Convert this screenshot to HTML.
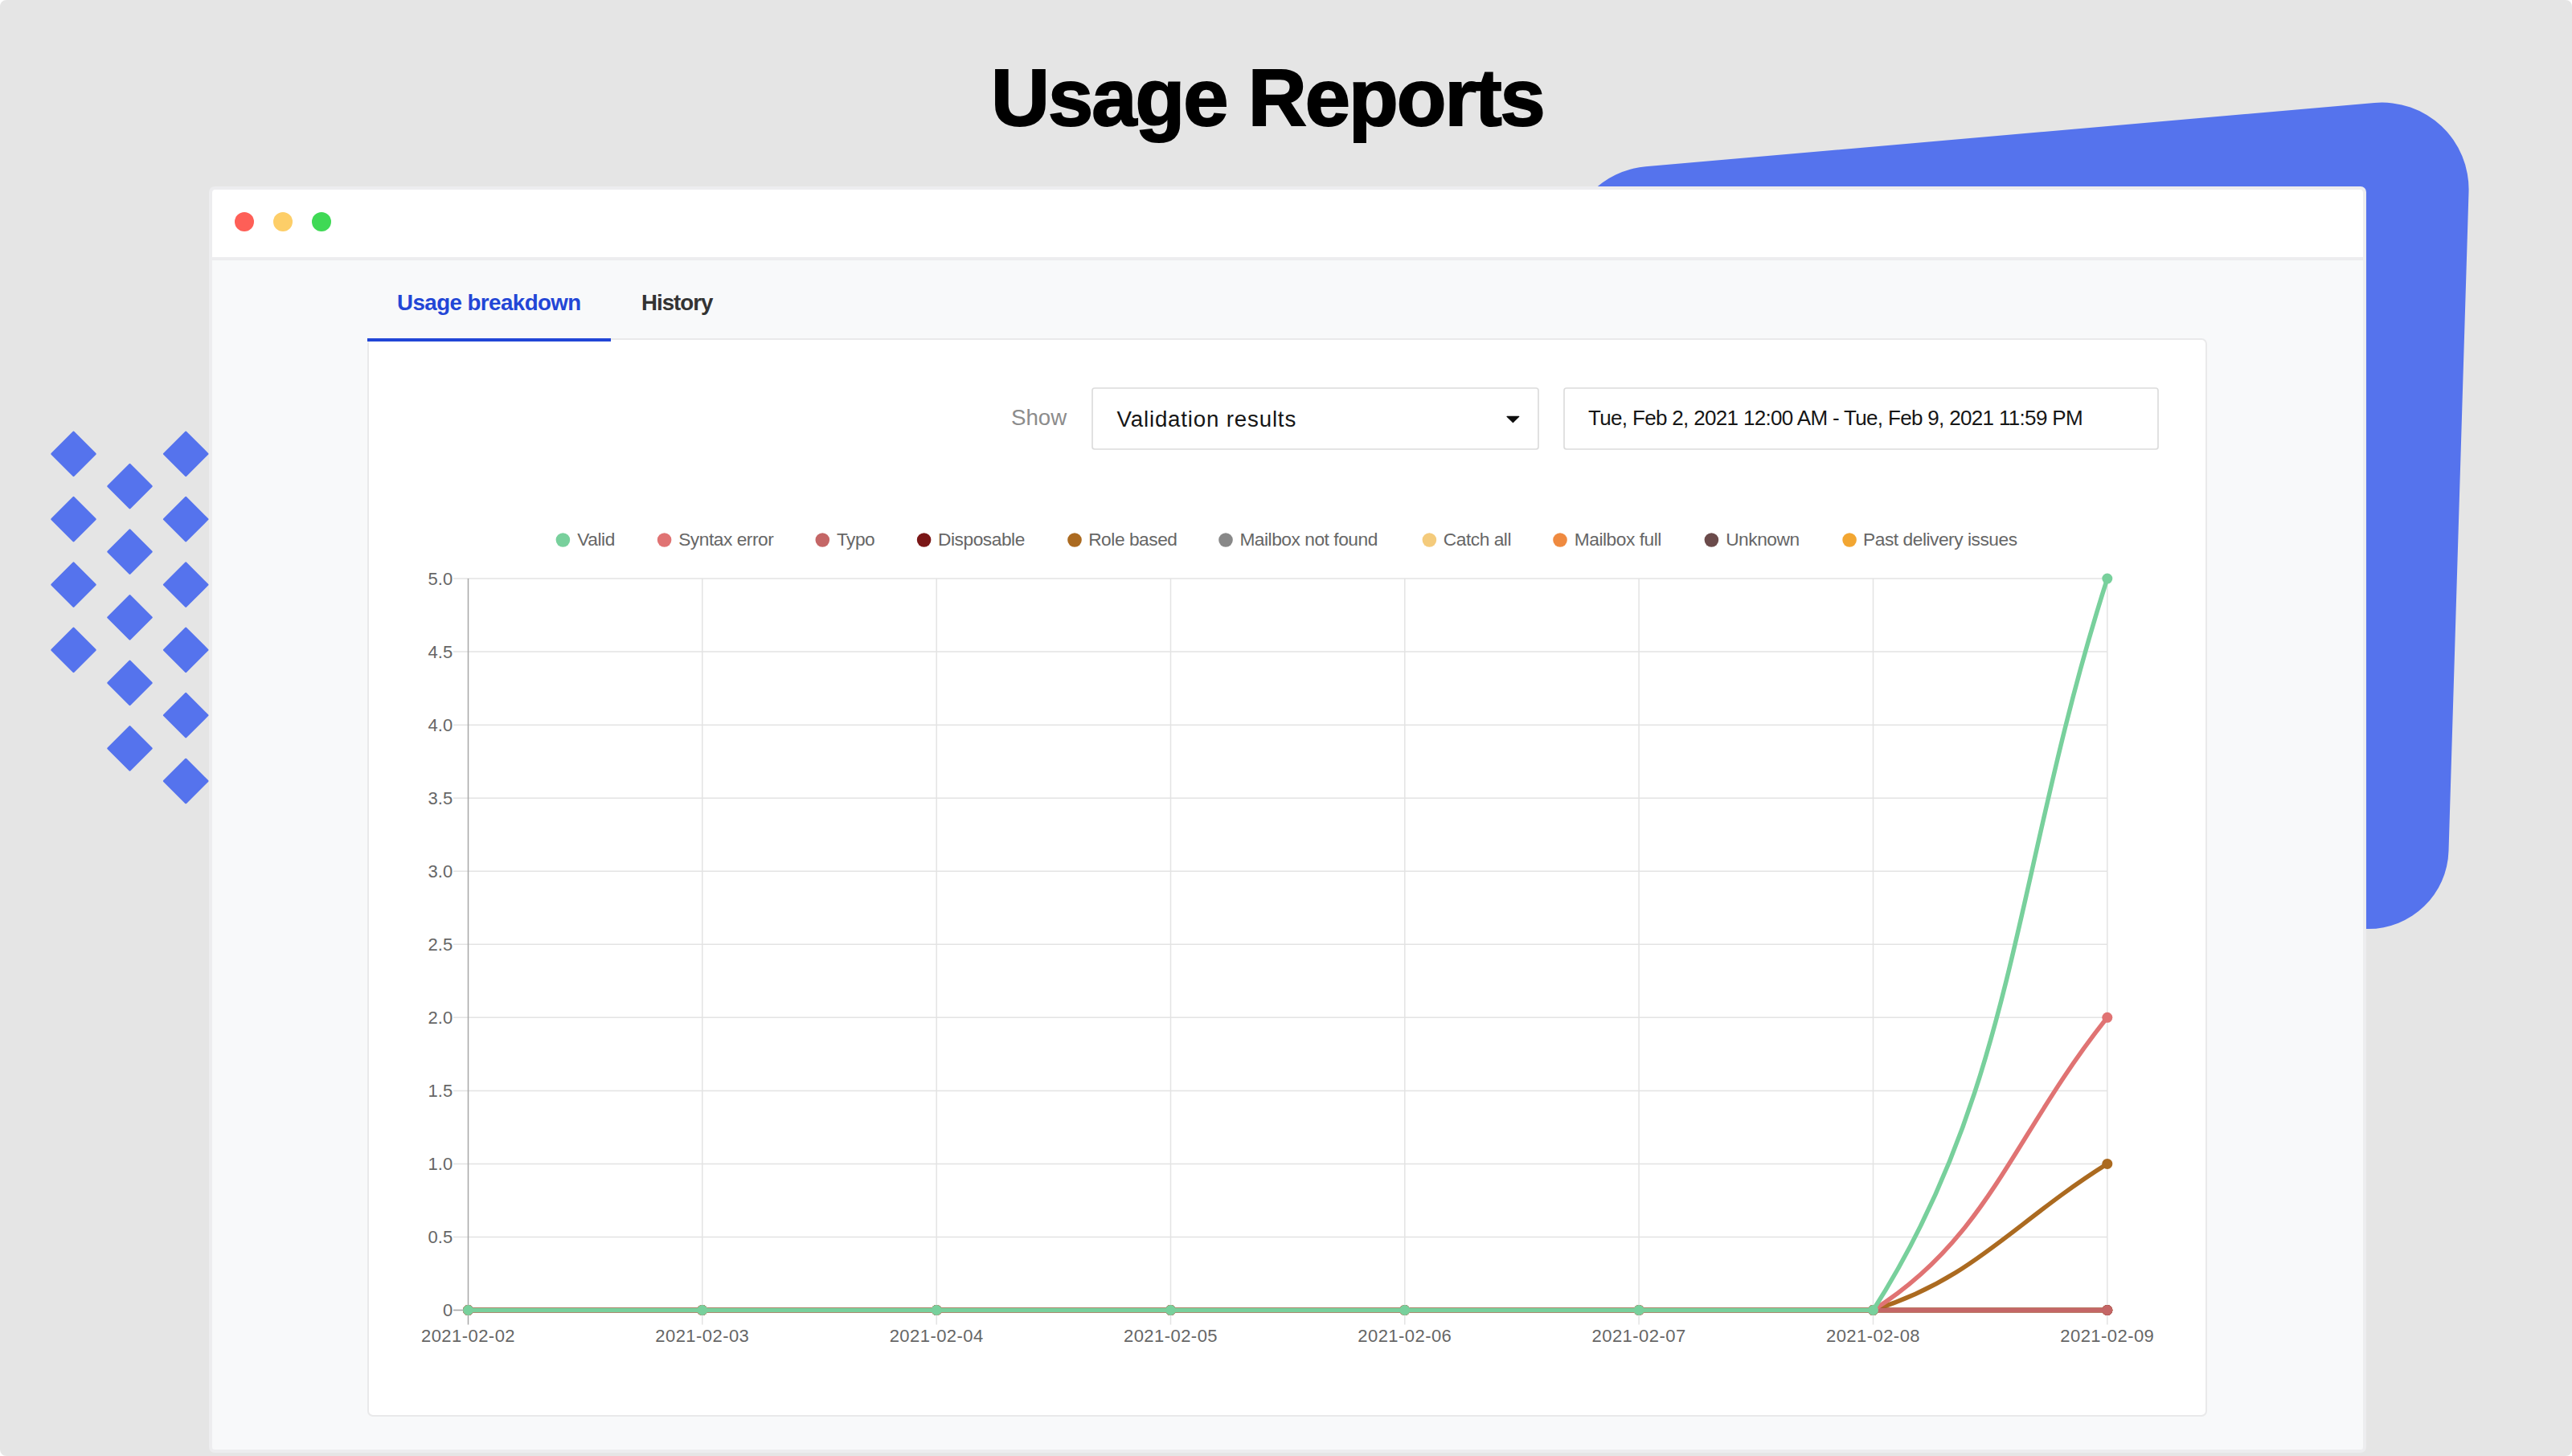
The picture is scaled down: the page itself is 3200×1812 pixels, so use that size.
<!DOCTYPE html>
<html><head><meta charset="utf-8"><style>
html,body{margin:0;padding:0;background:#ffffff;width:3200px;height:1812px;overflow:hidden}
.bg{position:absolute;left:0;top:0;width:3200px;height:1812px;background:#e5e5e5;border-radius:8px}
svg{position:absolute;left:0;top:0}
</style></head><body><div class="bg"></div>
<svg width="3200" height="1812" viewBox="0 0 3200 1812">
<path d="M 2047.4 207.3 L 2954.1 128.0 A 108.0 108.0 0 0 1 3071.5 238.9 L 3046.5 1059.1 A 100.0 100.0 0 0 1 2946.5 1156.0 L 1932.9 1156.0 A 20.0 20.0 0 0 1 1912.9 1135.1 L 1948.9 310.1 A 108.0 108.0 0 0 1 2047.4 207.3 Z" fill="#5573ed"/>
<g fill="#5573ed" stroke="#5573ed" stroke-width="2.5" stroke-linejoin="round"><path d="M91.5 537.8 L118.5 564.8 L91.5 591.8 L64.5 564.8 Z"/><path d="M91.5 619.2 L118.5 646.2 L91.5 673.2 L64.5 646.2 Z"/><path d="M91.5 700.7 L118.5 727.7 L91.5 754.7 L64.5 727.7 Z"/><path d="M91.5 781.8 L118.5 808.8 L91.5 835.8 L64.5 808.8 Z"/><path d="M161.5 578.2 L188.5 605.2 L161.5 632.2 L134.5 605.2 Z"/><path d="M161.5 659.6 L188.5 686.6 L161.5 713.6 L134.5 686.6 Z"/><path d="M161.5 741.4 L188.5 768.4 L161.5 795.4 L134.5 768.4 Z"/><path d="M161.5 822.9 L188.5 849.9 L161.5 876.9 L134.5 849.9 Z"/><path d="M161.5 904.3 L188.5 931.3 L161.5 958.3 L134.5 931.3 Z"/><path d="M231.2 537.8 L258.2 564.8 L231.2 591.8 L204.2 564.8 Z"/><path d="M231.2 619.2 L258.2 646.2 L231.2 673.2 L204.2 646.2 Z"/><path d="M231.2 700.7 L258.2 727.7 L231.2 754.7 L204.2 727.7 Z"/><path d="M231.2 781.8 L258.2 808.8 L231.2 835.8 L204.2 808.8 Z"/><path d="M231.2 863.2 L258.2 890.2 L231.2 917.2 L204.2 890.2 Z"/><path d="M231.2 945.0 L258.2 972.0 L231.2 999.0 L204.2 972.0 Z"/></g>
<rect x="260" y="232" width="2684" height="1576" rx="7" fill="#ededef"/>
<path d="M264 320 L264 240 Q264 236 268 236 L2936 236 Q2940 236 2940 240 L2940 320 Z" fill="#ffffff"/>
<path d="M264 324 L2940 324 L2940 1801 Q2940 1804 2937 1804 L267 1804 Q264 1804 264 1801 Z" fill="#f8f9fa"/>
<circle cx="304" cy="276" r="12" fill="#fe5f57"/>
<circle cx="352" cy="276" r="12" fill="#fdce68"/>
<circle cx="400" cy="276" r="12" fill="#3fd955"/>
<text stroke="#000" stroke-width="2" stroke-linejoin="miter" x="1233.0" y="155.8" font-family='"Liberation Sans", sans-serif' font-size="101" font-weight="bold" fill="#000000" letter-spacing="-1.92" text-anchor="start">Usage Reports</text>
<rect x="458" y="422" width="2287" height="1340" rx="6" fill="#ffffff" stroke="#e9e9ea" stroke-width="2"/>
<text x="494.0" y="386.0" font-family='"Liberation Sans", sans-serif' font-size="27.7" font-weight="bold" fill="#2346d6" letter-spacing="-0.55" text-anchor="start">Usage breakdown</text>
<text x="798.0" y="386.0" font-family='"Liberation Sans", sans-serif' font-size="27.7" font-weight="bold" fill="#333333" letter-spacing="-1" text-anchor="start">History</text>
<rect x="457" y="421" width="303" height="4" fill="#2146d6"/>
<text x="1258.0" y="528.5" font-family='"Liberation Sans", sans-serif' font-size="27.7" font-weight="normal" fill="#8c8c8c" letter-spacing="0" text-anchor="start">Show</text>
<rect x="1359" y="483" width="555" height="76" rx="3" fill="#ffffff" stroke="#dcdcdc" stroke-width="1.7"/>
<text x="1389.5" y="531.2" font-family='"Liberation Sans", sans-serif' font-size="27.7" font-weight="normal" fill="#161616" letter-spacing="0.82" text-anchor="start">Validation results</text>
<path d="M1875 518.4 L1889.8 518.4 L1882.4 525.6 Z" fill="#0d0d0d" stroke="#0d0d0d" stroke-width="1.2" stroke-linejoin="round"/>
<rect x="1946" y="483" width="739" height="76" rx="3" fill="#ffffff" stroke="#dcdcdc" stroke-width="1.7"/>
<text x="1976.0" y="529.3" font-family='"Liberation Sans", sans-serif' font-size="26" font-weight="normal" fill="#161616" letter-spacing="-0.67" text-anchor="start">Tue, Feb 2, 2021 12:00 AM - Tue, Feb 9, 2021 11:59 PM</text>
<circle cx="700.4" cy="672" r="8.8" fill="#78d09c"/>
<text x="718.3" y="678.9" font-family='"Liberation Sans", sans-serif' font-size="22.7" font-weight="normal" fill="#666666" letter-spacing="-0.45" text-anchor="start">Valid</text>
<circle cx="826.6" cy="672" r="8.8" fill="#e07373"/>
<text x="844.2" y="678.9" font-family='"Liberation Sans", sans-serif' font-size="22.7" font-weight="normal" fill="#666666" letter-spacing="-0.45" text-anchor="start">Syntax error</text>
<circle cx="1023.3" cy="672" r="8.8" fill="#c46666"/>
<text x="1040.9" y="678.9" font-family='"Liberation Sans", sans-serif' font-size="22.7" font-weight="normal" fill="#666666" letter-spacing="-0.45" text-anchor="start">Typo</text>
<circle cx="1149.6" cy="672" r="8.8" fill="#7a1616"/>
<text x="1167.1" y="678.9" font-family='"Liberation Sans", sans-serif' font-size="22.7" font-weight="normal" fill="#666666" letter-spacing="-0.45" text-anchor="start">Disposable</text>
<circle cx="1337" cy="672" r="8.8" fill="#ab6a20"/>
<text x="1354.2" y="678.9" font-family='"Liberation Sans", sans-serif' font-size="22.7" font-weight="normal" fill="#666666" letter-spacing="-0.45" text-anchor="start">Role based</text>
<circle cx="1525" cy="672" r="8.8" fill="#888888"/>
<text x="1542.4" y="678.9" font-family='"Liberation Sans", sans-serif' font-size="22.7" font-weight="normal" fill="#666666" letter-spacing="-0.45" text-anchor="start">Mailbox not found</text>
<circle cx="1778.4" cy="672" r="8.8" fill="#f4cb7c"/>
<text x="1795.8" y="678.9" font-family='"Liberation Sans", sans-serif' font-size="22.7" font-weight="normal" fill="#666666" letter-spacing="-0.45" text-anchor="start">Catch all</text>
<circle cx="1941" cy="672" r="8.8" fill="#ef8a40"/>
<text x="1958.8" y="678.9" font-family='"Liberation Sans", sans-serif' font-size="22.7" font-weight="normal" fill="#666666" letter-spacing="-0.45" text-anchor="start">Mailbox full</text>
<circle cx="2129.4" cy="672" r="8.8" fill="#6b4b4b"/>
<text x="2147.2" y="678.9" font-family='"Liberation Sans", sans-serif' font-size="22.7" font-weight="normal" fill="#666666" letter-spacing="-0.45" text-anchor="start">Unknown</text>
<circle cx="2301.1" cy="672" r="8.8" fill="#f2a632"/>
<text x="2318.1" y="678.9" font-family='"Liberation Sans", sans-serif' font-size="22.7" font-weight="normal" fill="#666666" letter-spacing="-0.45" text-anchor="start">Past delivery issues</text>
<g stroke="#e3e3e3" stroke-width="1.5"><line x1="564" y1="1630.5" x2="2621.8" y2="1630.5"/><line x1="564" y1="1539.5" x2="2621.8" y2="1539.5"/><line x1="564" y1="1448.4" x2="2621.8" y2="1448.4"/><line x1="564" y1="1357.4" x2="2621.8" y2="1357.4"/><line x1="564" y1="1266.3" x2="2621.8" y2="1266.3"/><line x1="564" y1="1175.3" x2="2621.8" y2="1175.3"/><line x1="564" y1="1084.3" x2="2621.8" y2="1084.3"/><line x1="564" y1="993.2" x2="2621.8" y2="993.2"/><line x1="564" y1="902.2" x2="2621.8" y2="902.2"/><line x1="564" y1="811.1" x2="2621.8" y2="811.1"/><line x1="564" y1="720.1" x2="2621.8" y2="720.1"/><line x1="873.8" y1="720.1" x2="873.8" y2="1648.5"/><line x1="1165.2" y1="720.1" x2="1165.2" y2="1648.5"/><line x1="1456.5" y1="720.1" x2="1456.5" y2="1648.5"/><line x1="1747.8" y1="720.1" x2="1747.8" y2="1648.5"/><line x1="2039.1" y1="720.1" x2="2039.1" y2="1648.5"/><line x1="2330.5" y1="720.1" x2="2330.5" y2="1648.5"/><line x1="2621.8" y1="720.1" x2="2621.8" y2="1648.5"/></g>
<line x1="582.5" y1="720.1" x2="582.5" y2="1648.5" stroke="#a8a8a8" stroke-width="1.5"/>
<line x1="564" y1="1630.5" x2="582.5" y2="1630.5" stroke="#a8a8a8" stroke-width="1.5"/>
<text x="563.2" y="1638.0" font-family='"Liberation Sans", sans-serif' font-size="22" font-weight="normal" fill="#666666" letter-spacing="0" text-anchor="end">0</text>
<text x="563.2" y="1547.0" font-family='"Liberation Sans", sans-serif' font-size="22" font-weight="normal" fill="#666666" letter-spacing="0" text-anchor="end">0.5</text>
<text x="563.2" y="1455.9" font-family='"Liberation Sans", sans-serif' font-size="22" font-weight="normal" fill="#666666" letter-spacing="0" text-anchor="end">1.0</text>
<text x="563.2" y="1364.9" font-family='"Liberation Sans", sans-serif' font-size="22" font-weight="normal" fill="#666666" letter-spacing="0" text-anchor="end">1.5</text>
<text x="563.2" y="1273.8" font-family='"Liberation Sans", sans-serif' font-size="22" font-weight="normal" fill="#666666" letter-spacing="0" text-anchor="end">2.0</text>
<text x="563.2" y="1182.8" font-family='"Liberation Sans", sans-serif' font-size="22" font-weight="normal" fill="#666666" letter-spacing="0" text-anchor="end">2.5</text>
<text x="563.2" y="1091.8" font-family='"Liberation Sans", sans-serif' font-size="22" font-weight="normal" fill="#666666" letter-spacing="0" text-anchor="end">3.0</text>
<text x="563.2" y="1000.7" font-family='"Liberation Sans", sans-serif' font-size="22" font-weight="normal" fill="#666666" letter-spacing="0" text-anchor="end">3.5</text>
<text x="563.2" y="909.7" font-family='"Liberation Sans", sans-serif' font-size="22" font-weight="normal" fill="#666666" letter-spacing="0" text-anchor="end">4.0</text>
<text x="563.2" y="818.6" font-family='"Liberation Sans", sans-serif' font-size="22" font-weight="normal" fill="#666666" letter-spacing="0" text-anchor="end">4.5</text>
<text x="563.2" y="727.6" font-family='"Liberation Sans", sans-serif' font-size="22" font-weight="normal" fill="#666666" letter-spacing="0" text-anchor="end">5.0</text>
<text x="582.5" y="1669.6" font-family='"Liberation Sans", sans-serif' font-size="22" font-weight="normal" fill="#666666" letter-spacing="0.45" text-anchor="middle">2021-02-02</text>
<text x="873.8" y="1669.6" font-family='"Liberation Sans", sans-serif' font-size="22" font-weight="normal" fill="#666666" letter-spacing="0.45" text-anchor="middle">2021-02-03</text>
<text x="1165.2" y="1669.6" font-family='"Liberation Sans", sans-serif' font-size="22" font-weight="normal" fill="#666666" letter-spacing="0.45" text-anchor="middle">2021-02-04</text>
<text x="1456.5" y="1669.6" font-family='"Liberation Sans", sans-serif' font-size="22" font-weight="normal" fill="#666666" letter-spacing="0.45" text-anchor="middle">2021-02-05</text>
<text x="1747.8" y="1669.6" font-family='"Liberation Sans", sans-serif' font-size="22" font-weight="normal" fill="#666666" letter-spacing="0.45" text-anchor="middle">2021-02-06</text>
<text x="2039.1" y="1669.6" font-family='"Liberation Sans", sans-serif' font-size="22" font-weight="normal" fill="#666666" letter-spacing="0.45" text-anchor="middle">2021-02-07</text>
<text x="2330.5" y="1669.6" font-family='"Liberation Sans", sans-serif' font-size="22" font-weight="normal" fill="#666666" letter-spacing="0.45" text-anchor="middle">2021-02-08</text>
<text x="2621.8" y="1669.6" font-family='"Liberation Sans", sans-serif' font-size="22" font-weight="normal" fill="#666666" letter-spacing="0.45" text-anchor="middle">2021-02-09</text>
<path d="M582.5 1630.5 C699.0 1630.5 757.3 1630.5 873.8 1630.5 C990.4 1630.5 1048.6 1630.5 1165.2 1630.5 C1281.7 1630.5 1340.0 1630.5 1456.5 1630.5 C1573.0 1630.5 1631.3 1630.5 1747.8 1630.5 C1864.4 1630.5 1922.6 1630.5 2039.1 1630.5 C2155.7 1630.5 2213.9 1630.5 2330.5 1630.5 C2447.0 1630.5 2505.3 1630.5 2621.8 1630.5" fill="none" stroke="#f2a632" stroke-width="5.5"/>
<circle cx="582.5" cy="1630.5" r="6.5" fill="#f2a632"/>
<circle cx="873.8" cy="1630.5" r="6.5" fill="#f2a632"/>
<circle cx="1165.2" cy="1630.5" r="6.5" fill="#f2a632"/>
<circle cx="1456.5" cy="1630.5" r="6.5" fill="#f2a632"/>
<circle cx="1747.8" cy="1630.5" r="6.5" fill="#f2a632"/>
<circle cx="2039.1" cy="1630.5" r="6.5" fill="#f2a632"/>
<circle cx="2330.5" cy="1630.5" r="6.5" fill="#f2a632"/>
<circle cx="2621.8" cy="1630.5" r="6.5" fill="#f2a632"/>
<path d="M582.5 1630.5 C699.0 1630.5 757.3 1630.5 873.8 1630.5 C990.4 1630.5 1048.6 1630.5 1165.2 1630.5 C1281.7 1630.5 1340.0 1630.5 1456.5 1630.5 C1573.0 1630.5 1631.3 1630.5 1747.8 1630.5 C1864.4 1630.5 1922.6 1630.5 2039.1 1630.5 C2155.7 1630.5 2213.9 1630.5 2330.5 1630.5 C2447.0 1630.5 2505.3 1630.5 2621.8 1630.5" fill="none" stroke="#6b4b4b" stroke-width="5.5"/>
<circle cx="582.5" cy="1630.5" r="6.5" fill="#6b4b4b"/>
<circle cx="873.8" cy="1630.5" r="6.5" fill="#6b4b4b"/>
<circle cx="1165.2" cy="1630.5" r="6.5" fill="#6b4b4b"/>
<circle cx="1456.5" cy="1630.5" r="6.5" fill="#6b4b4b"/>
<circle cx="1747.8" cy="1630.5" r="6.5" fill="#6b4b4b"/>
<circle cx="2039.1" cy="1630.5" r="6.5" fill="#6b4b4b"/>
<circle cx="2330.5" cy="1630.5" r="6.5" fill="#6b4b4b"/>
<circle cx="2621.8" cy="1630.5" r="6.5" fill="#6b4b4b"/>
<path d="M582.5 1630.5 C699.0 1630.5 757.3 1630.5 873.8 1630.5 C990.4 1630.5 1048.6 1630.5 1165.2 1630.5 C1281.7 1630.5 1340.0 1630.5 1456.5 1630.5 C1573.0 1630.5 1631.3 1630.5 1747.8 1630.5 C1864.4 1630.5 1922.6 1630.5 2039.1 1630.5 C2155.7 1630.5 2213.9 1630.5 2330.5 1630.5 C2447.0 1630.5 2505.3 1630.5 2621.8 1630.5" fill="none" stroke="#ef8a40" stroke-width="5.5"/>
<circle cx="582.5" cy="1630.5" r="6.5" fill="#ef8a40"/>
<circle cx="873.8" cy="1630.5" r="6.5" fill="#ef8a40"/>
<circle cx="1165.2" cy="1630.5" r="6.5" fill="#ef8a40"/>
<circle cx="1456.5" cy="1630.5" r="6.5" fill="#ef8a40"/>
<circle cx="1747.8" cy="1630.5" r="6.5" fill="#ef8a40"/>
<circle cx="2039.1" cy="1630.5" r="6.5" fill="#ef8a40"/>
<circle cx="2330.5" cy="1630.5" r="6.5" fill="#ef8a40"/>
<circle cx="2621.8" cy="1630.5" r="6.5" fill="#ef8a40"/>
<path d="M582.5 1630.5 C699.0 1630.5 757.3 1630.5 873.8 1630.5 C990.4 1630.5 1048.6 1630.5 1165.2 1630.5 C1281.7 1630.5 1340.0 1630.5 1456.5 1630.5 C1573.0 1630.5 1631.3 1630.5 1747.8 1630.5 C1864.4 1630.5 1922.6 1630.5 2039.1 1630.5 C2155.7 1630.5 2213.9 1630.5 2330.5 1630.5 C2447.0 1630.5 2505.3 1630.5 2621.8 1630.5" fill="none" stroke="#f4cb7c" stroke-width="5.5"/>
<circle cx="582.5" cy="1630.5" r="6.5" fill="#f4cb7c"/>
<circle cx="873.8" cy="1630.5" r="6.5" fill="#f4cb7c"/>
<circle cx="1165.2" cy="1630.5" r="6.5" fill="#f4cb7c"/>
<circle cx="1456.5" cy="1630.5" r="6.5" fill="#f4cb7c"/>
<circle cx="1747.8" cy="1630.5" r="6.5" fill="#f4cb7c"/>
<circle cx="2039.1" cy="1630.5" r="6.5" fill="#f4cb7c"/>
<circle cx="2330.5" cy="1630.5" r="6.5" fill="#f4cb7c"/>
<circle cx="2621.8" cy="1630.5" r="6.5" fill="#f4cb7c"/>
<path d="M582.5 1630.5 C699.0 1630.5 757.3 1630.5 873.8 1630.5 C990.4 1630.5 1048.6 1630.5 1165.2 1630.5 C1281.7 1630.5 1340.0 1630.5 1456.5 1630.5 C1573.0 1630.5 1631.3 1630.5 1747.8 1630.5 C1864.4 1630.5 1922.6 1630.5 2039.1 1630.5 C2155.7 1630.5 2213.9 1630.5 2330.5 1630.5 C2447.0 1630.5 2505.3 1630.5 2621.8 1630.5" fill="none" stroke="#888888" stroke-width="5.5"/>
<circle cx="582.5" cy="1630.5" r="6.5" fill="#888888"/>
<circle cx="873.8" cy="1630.5" r="6.5" fill="#888888"/>
<circle cx="1165.2" cy="1630.5" r="6.5" fill="#888888"/>
<circle cx="1456.5" cy="1630.5" r="6.5" fill="#888888"/>
<circle cx="1747.8" cy="1630.5" r="6.5" fill="#888888"/>
<circle cx="2039.1" cy="1630.5" r="6.5" fill="#888888"/>
<circle cx="2330.5" cy="1630.5" r="6.5" fill="#888888"/>
<circle cx="2621.8" cy="1630.5" r="6.5" fill="#888888"/>
<path d="M582.5 1630.5 C699.0 1630.5 757.3 1630.5 873.8 1630.5 C990.4 1630.5 1048.6 1630.5 1165.2 1630.5 C1281.7 1630.5 1340.0 1630.5 1456.5 1630.5 C1573.0 1630.5 1631.3 1630.5 1747.8 1630.5 C1864.4 1630.5 1922.6 1630.5 2039.1 1630.5 C2155.7 1630.5 2223.5 1630.5 2330.5 1630.5 C2456.6 1591.1 2505.3 1521.3 2621.8 1448.4" fill="none" stroke="#ab6a20" stroke-width="5.5"/>
<circle cx="582.5" cy="1630.5" r="6.5" fill="#ab6a20"/>
<circle cx="873.8" cy="1630.5" r="6.5" fill="#ab6a20"/>
<circle cx="1165.2" cy="1630.5" r="6.5" fill="#ab6a20"/>
<circle cx="1456.5" cy="1630.5" r="6.5" fill="#ab6a20"/>
<circle cx="1747.8" cy="1630.5" r="6.5" fill="#ab6a20"/>
<circle cx="2039.1" cy="1630.5" r="6.5" fill="#ab6a20"/>
<circle cx="2330.5" cy="1630.5" r="6.5" fill="#ab6a20"/>
<circle cx="2621.8" cy="1448.4" r="6.5" fill="#ab6a20"/>
<path d="M582.5 1630.5 C699.0 1630.5 757.3 1630.5 873.8 1630.5 C990.4 1630.5 1048.6 1630.5 1165.2 1630.5 C1281.7 1630.5 1340.0 1630.5 1456.5 1630.5 C1573.0 1630.5 1631.3 1630.5 1747.8 1630.5 C1864.4 1630.5 1922.6 1630.5 2039.1 1630.5 C2155.7 1630.5 2213.9 1630.5 2330.5 1630.5 C2447.0 1630.5 2505.3 1630.5 2621.8 1630.5" fill="none" stroke="#7a1616" stroke-width="5.5"/>
<circle cx="582.5" cy="1630.5" r="6.5" fill="#7a1616"/>
<circle cx="873.8" cy="1630.5" r="6.5" fill="#7a1616"/>
<circle cx="1165.2" cy="1630.5" r="6.5" fill="#7a1616"/>
<circle cx="1456.5" cy="1630.5" r="6.5" fill="#7a1616"/>
<circle cx="1747.8" cy="1630.5" r="6.5" fill="#7a1616"/>
<circle cx="2039.1" cy="1630.5" r="6.5" fill="#7a1616"/>
<circle cx="2330.5" cy="1630.5" r="6.5" fill="#7a1616"/>
<circle cx="2621.8" cy="1630.5" r="6.5" fill="#7a1616"/>
<path d="M582.5 1630.5 C699.0 1630.5 757.3 1630.5 873.8 1630.5 C990.4 1630.5 1048.6 1630.5 1165.2 1630.5 C1281.7 1630.5 1340.0 1630.5 1456.5 1630.5 C1573.0 1630.5 1631.3 1630.5 1747.8 1630.5 C1864.4 1630.5 1922.6 1630.5 2039.1 1630.5 C2155.7 1630.5 2213.9 1630.5 2330.5 1630.5 C2447.0 1630.5 2505.3 1630.5 2621.8 1630.5" fill="none" stroke="#c46666" stroke-width="5.5"/>
<circle cx="582.5" cy="1630.5" r="6.5" fill="#c46666"/>
<circle cx="873.8" cy="1630.5" r="6.5" fill="#c46666"/>
<circle cx="1165.2" cy="1630.5" r="6.5" fill="#c46666"/>
<circle cx="1456.5" cy="1630.5" r="6.5" fill="#c46666"/>
<circle cx="1747.8" cy="1630.5" r="6.5" fill="#c46666"/>
<circle cx="2039.1" cy="1630.5" r="6.5" fill="#c46666"/>
<circle cx="2330.5" cy="1630.5" r="6.5" fill="#c46666"/>
<circle cx="2621.8" cy="1630.5" r="6.5" fill="#c46666"/>
<path d="M582.5 1630.5 C699.0 1630.5 757.3 1630.5 873.8 1630.5 C990.4 1630.5 1048.6 1630.5 1165.2 1630.5 C1281.7 1630.5 1340.0 1630.5 1456.5 1630.5 C1573.0 1630.5 1631.3 1630.5 1747.8 1630.5 C1864.4 1630.5 1922.6 1630.5 2039.1 1630.5 C2155.7 1630.5 2240.9 1630.5 2330.5 1630.5 C2473.9 1540.8 2505.3 1412.0 2621.8 1266.3" fill="none" stroke="#e07373" stroke-width="5.5"/>
<circle cx="582.5" cy="1630.5" r="6.5" fill="#e07373"/>
<circle cx="873.8" cy="1630.5" r="6.5" fill="#e07373"/>
<circle cx="1165.2" cy="1630.5" r="6.5" fill="#e07373"/>
<circle cx="1456.5" cy="1630.5" r="6.5" fill="#e07373"/>
<circle cx="1747.8" cy="1630.5" r="6.5" fill="#e07373"/>
<circle cx="2039.1" cy="1630.5" r="6.5" fill="#e07373"/>
<circle cx="2330.5" cy="1630.5" r="6.5" fill="#e07373"/>
<circle cx="2621.8" cy="1266.3" r="6.5" fill="#e07373"/>
<path d="M582.5 1630.5 C699.0 1630.5 757.3 1630.5 873.8 1630.5 C990.4 1630.5 1048.6 1630.5 1165.2 1630.5 C1281.7 1630.5 1340.0 1630.5 1456.5 1630.5 C1573.0 1630.5 1631.3 1630.5 1747.8 1630.5 C1864.4 1630.5 1922.6 1630.5 2039.1 1630.5 C2155.7 1630.5 2276.0 1630.5 2330.5 1630.5 C2509.1 1351.4 2505.3 1084.3 2621.8 720.1" fill="none" stroke="#78d09c" stroke-width="5.5"/>
<circle cx="582.5" cy="1630.5" r="6.5" fill="#78d09c"/>
<circle cx="873.8" cy="1630.5" r="6.5" fill="#78d09c"/>
<circle cx="1165.2" cy="1630.5" r="6.5" fill="#78d09c"/>
<circle cx="1456.5" cy="1630.5" r="6.5" fill="#78d09c"/>
<circle cx="1747.8" cy="1630.5" r="6.5" fill="#78d09c"/>
<circle cx="2039.1" cy="1630.5" r="6.5" fill="#78d09c"/>
<circle cx="2330.5" cy="1630.5" r="6.5" fill="#78d09c"/>
<circle cx="2621.8" cy="720.1" r="6.5" fill="#78d09c"/>
</svg></body></html>
